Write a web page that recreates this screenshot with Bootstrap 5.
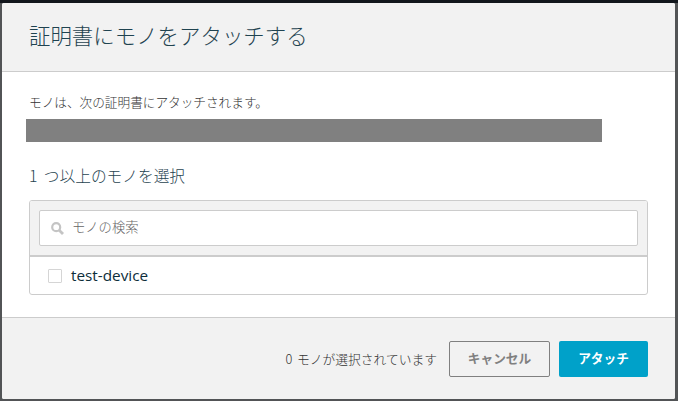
<!DOCTYPE html>
<html lang="ja"><head><meta charset="utf-8">
<link href="https://cdn.jsdelivr.net/npm/bootstrap@5.3.0/dist/css/bootstrap.min.css" rel="stylesheet">
<style>
html,body{height:100%;margin:0}
body{background:#525456;font-family:"Open Sans","Noto Sans CJK JP",sans-serif;overflow:hidden;color:#444}
.backdrop-top{background:#12161c;height:3px}
.dlg{margin:0 3px 0 2px;height:396px;background:#fff;border-radius:2px;overflow:hidden}
.dlg-head{background:#f2f2f2;border-bottom:1px solid #ccc;height:69px;padding:0 27px 2px}
.dlg-title{font-size:21.45px;font-weight:300;color:#1f4350;margin:0;line-height:1}
.dlg-body{padding:22px 27px 0 24px}
.note{font-size:12.65px;line-height:16px;font-weight:300;color:#333;margin:0 0 0 3px}
.redact{background:gray;height:23px;width:576px;margin-top:9px}
.pick{font-size:15.7px;font-weight:300;color:#1f4350;margin:24px 0 14px 3px;line-height:20px;font-family:"Noto Sans CJK JP",sans-serif;word-spacing:3px}
.panel{margin-left:3px;width:619px;border:1px solid #ccc;border-radius:3px;overflow:hidden}
.panel-top{background:#f2f2f2;padding:9px;height:56px;border-bottom:2px solid #ccc}
.srch{background:#fff;border:1px solid #ccc;border-radius:2px;height:36px;padding-left:11px;gap:8px;font-size:13.3px;font-weight:300;color:#666}
.item{height:37px;padding-left:18px;gap:9px;font-size:15.3px;color:#0d2e3a}
.cb{width:14px;height:14px;border:1px solid #d5d5d5;border-radius:1px;flex:none}
.dlg-foot{background:#f2f2f2;border-top:1px solid #ccc;height:82px;padding:0 27px}
.count{font-size:12.75px;font-weight:300;color:#333;margin-right:12px;font-family:"Noto Sans CJK JP",sans-serif;word-spacing:2px}
.btn-cancel,.btn-attach{height:36px;font-size:12.7px;font-weight:700;border-radius:2px;padding:0}
.btn-cancel{width:101px;border:1px solid #808080;color:#808080;background:transparent;margin-right:9px}
.btn-attach{width:89px;border:0;background:#00a1c9;color:#fff}
</style></head><body>
<div class="backdrop-top"></div>
<div class="dlg d-flex flex-column">
 <div class="dlg-head d-flex align-items-center"><h1 class="dlg-title">証明書にモノをアタッチする</h1></div>
 <div class="dlg-body flex-grow-1">
  <p class="note">モノは、次の証明書にアタッチされます。</p>
  <div class="redact"></div>
  <div class="pick">1 つ以上のモノを選択</div>
  <div class="panel">
   <div class="panel-top"><div class="srch d-flex align-items-center"><svg width="13" height="13" viewBox="0 0 13 13" fill="none" stroke="#c4c4c4" stroke-width="2.2"><circle cx="5.2" cy="5.2" r="4"/><path d="M8.2 8.2 12 12" stroke-width="2.8"/></svg><span>モノの検索</span></div></div>
   <div class="item d-flex align-items-center"><span class="cb"></span><span>test-device</span></div>
  </div>
 </div>
 <div class="dlg-foot d-flex align-items-center justify-content-end">
  <span class="count">0 モノが選択されています</span>
  <button class="btn btn-cancel d-flex align-items-center justify-content-center" type="button">キャンセル</button>
  <button class="btn btn-attach d-flex align-items-center justify-content-center" type="button">アタッチ</button>
 </div>
</div>
<script src="https://cdn.jsdelivr.net/npm/bootstrap@5.3.0/dist/js/bootstrap.bundle.min.js"></script>
</body></html>
